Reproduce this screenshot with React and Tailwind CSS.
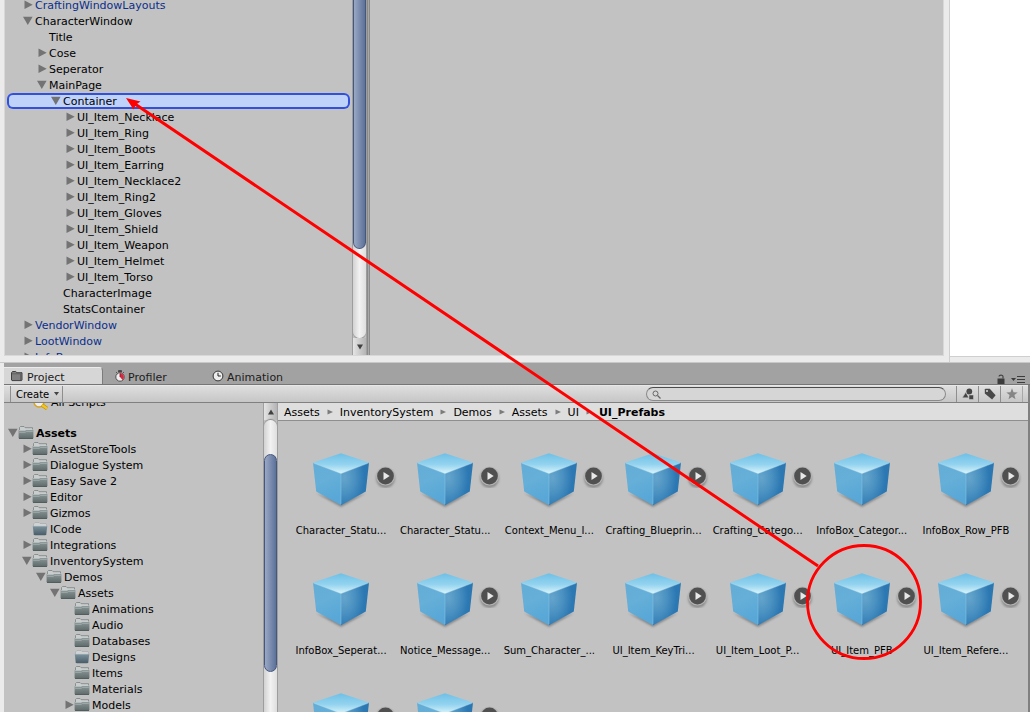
import React from "react";

const HIERARCHY = [
  { name: "CraftingWindowLayouts", depth: 0, arrow: "closed", prefab: true },
  { name: "CharacterWindow", depth: 0, arrow: "open" },
  { name: "Title", depth: 1 },
  { name: "Cose", depth: 1, arrow: "closed" },
  { name: "Seperator", depth: 1, arrow: "closed" },
  { name: "MainPage", depth: 1, arrow: "open" },
  { name: "Container", depth: 2, arrow: "open", selected: true },
  { name: "UI_Item_Necklace", depth: 3, arrow: "closed" },
  { name: "UI_Item_Ring", depth: 3, arrow: "closed" },
  { name: "UI_Item_Boots", depth: 3, arrow: "closed" },
  { name: "UI_Item_Earring", depth: 3, arrow: "closed" },
  { name: "UI_Item_Necklace2", depth: 3, arrow: "closed" },
  { name: "UI_Item_Ring2", depth: 3, arrow: "closed" },
  { name: "UI_Item_Gloves", depth: 3, arrow: "closed" },
  { name: "UI_Item_Shield", depth: 3, arrow: "closed" },
  { name: "UI_Item_Weapon", depth: 3, arrow: "closed" },
  { name: "UI_Item_Helmet", depth: 3, arrow: "closed" },
  { name: "UI_Item_Torso", depth: 3, arrow: "closed" },
  { name: "CharacterImage", depth: 2 },
  { name: "StatsContainer", depth: 2 },
  { name: "VendorWindow", depth: 0, arrow: "closed", prefab: true },
  { name: "LootWindow", depth: 0, arrow: "closed", prefab: true },
  { name: "InfoBox", depth: 0, arrow: "closed", prefab: true },
];

const FOLDERS = [
  { name: "Assets", depth: 0, arrow: "open", bold: true },
  { name: "AssetStoreTools", depth: 1, arrow: "closed" },
  { name: "Dialogue System", depth: 1, arrow: "closed" },
  { name: "Easy Save 2", depth: 1, arrow: "closed" },
  { name: "Editor", depth: 1, arrow: "closed" },
  { name: "Gizmos", depth: 1, arrow: "closed" },
  { name: "ICode", depth: 1, empty: true },
  { name: "Integrations", depth: 1, arrow: "closed" },
  { name: "InventorySystem", depth: 1, arrow: "open" },
  { name: "Demos", depth: 2, arrow: "open" },
  { name: "Assets", depth: 3, arrow: "open" },
  { name: "Animations", depth: 4 },
  { name: "Audio", depth: 4 },
  { name: "Databases", depth: 4 },
  { name: "Designs", depth: 4, empty: true },
  { name: "Items", depth: 4 },
  { name: "Materials", depth: 4 },
  { name: "Models", depth: 4, arrow: "closed" },
];

const ASSETS = [
  { name: "Character_Statu...", play: true },
  { name: "Character_Statu...", play: true },
  { name: "Context_Menu_I...", play: true },
  { name: "Crafting_Blueprin...", play: true },
  { name: "Crafting_Catego...", play: true },
  { name: "InfoBox_Categor..." },
  { name: "InfoBox_Row_PFB", play: true },
  { name: "InfoBox_Seperat..." },
  { name: "Notice_Message...", play: true },
  { name: "Sum_Character_..." },
  { name: "UI_Item_KeyTri...", play: true },
  { name: "UI_Item_Loot_P...", play: true },
  { name: "UI_Item_PFB", play: true },
  { name: "UI_Item_Refere...", play: true },
  { name: "", play: true },
  { name: "", play: true },
];

const HIERARCHY_INDENT = ["pl-4", "pl-[30px]", "pl-11", "pl-[58px]"];
const FOLDER_INDENT = ["pl-1", "pl-[18px]", "pl-8", "pl-[46px]", "pl-[60px]"];

function Foldout({ state }) {
  return (
    <svg className="h-3 w-3 shrink-0" viewBox="0 0 12 12" fill="#737373" aria-hidden="true">
      {state === "closed" && <path d="M1.5 1.5 9.7 5.8 1.5 10z" />}
      {state === "open" && <path d="M0 1.8h9.6L4.8 10z" />}
    </svg>
  );
}

function FolderIcon({ empty }) {
  return (
    <svg className="h-4 w-4 shrink-0" viewBox="0 0 16 16" aria-hidden="true">
      {empty ? (
        <>
          <path d="M1.500 7V3L3 1.500h4l1 1h6L14.700 4v3z" fill="#d0d3d4" stroke="#a0a5a7" strokeWidth=".6" />
          <path d="M.8 5h14.400l-.9 8.300-1 .9H2.700l-1-.9z" fill="url(#folderEmpty)" />
          <path d="M1.200 5.400h13.600" stroke="#9fb0b8" strokeWidth=".7" />
        </>
      ) : (
        <>
          <path d="M1.500 6V2.500l1-1h3.500l1.200 1.200h7.300V6z" fill="#c9cdcd" stroke="#7a8181" strokeWidth=".8" />
          <path d="M.6 5h14.800v8l-.8.900H1.400l-.8-.9z" fill="url(#folderFull)" />
          <path d="M1.200 5.600h6L8.200 4.600h6.600" fill="none" stroke="#c5cccc" strokeWidth=".8" />
          <path d="M1.200 7.400h6l1-.9h6.600" fill="none" stroke="#a9b4b4" strokeWidth=".7" />
          <path d="M1 13.500h14" stroke="#4e5a5a" strokeWidth=".8" />
        </>
      )}
    </svg>
  );
}

function SharedGradients() {
  return (
    <svg className="absolute h-0 w-0" aria-hidden="true">
      <defs>
        <linearGradient id="folderFull" x1="0" y1="0" x2="0" y2="1">
          <stop offset="0" stopColor="#8b9797" />
          <stop offset="1" stopColor="#5d6969" />
        </linearGradient>
        <linearGradient id="folderEmpty" x1="0" y1="0" x2="0" y2="1">
          <stop offset="0" stopColor="#7d939e" />
          <stop offset="1" stopColor="#475c67" />
        </linearGradient>
        <linearGradient id="cubeTop" x1="0" y1="0" x2="0" y2="1">
          <stop offset="0" stopColor="#6fbfe6" />
          <stop offset=".55" stopColor="#93d3ef" />
          <stop offset="1" stopColor="#d9f4fb" />
        </linearGradient>
        <linearGradient id="cubeLeft" x1="0" y1="0" x2=".3" y2="1">
          <stop offset="0" stopColor="#63acd6" />
          <stop offset=".5" stopColor="#65afd8" />
          <stop offset="1" stopColor="#58a7d7" />
        </linearGradient>
        <radialGradient id="cubeRight" cx=".12" cy=".35" r=".95">
          <stop offset="0" stopColor="#65a5cc" />
          <stop offset=".4" stopColor="#4a91c1" />
          <stop offset=".75" stopColor="#2c78b3" />
          <stop offset="1" stopColor="#2c76b0" />
        </radialGradient>
      </defs>
    </svg>
  );
}

function Cube() {
  return (
    <svg className="h-14 w-[60px]" viewBox="0 0 60 56" aria-hidden="true">
      <path d="M5 40 30 54 55 40 30 48z" fill="#555" opacity=".55" style={{ filter: "blur(1px)" }} />
      <path d="M2 9.500 30 20v32.300L5.200 38.500z" fill="url(#cubeLeft)" />
      <path d="M58 9.500 30 20v32.300l24.800-13.800z" fill="url(#cubeRight)" />
      <path d="M30 .2 58 9.500 30 20.500 2 9.500z" fill="url(#cubeTop)" />
      <path d="M2.400 10 30 20.600 57.600 10" fill="none" stroke="#c5eaf6" strokeWidth=".6" opacity=".7" />
      <path d="M30 20.600V51" stroke="#8cc9e8" strokeWidth=".7" opacity=".7" />
    </svg>
  );
}

function PlayBadge() {
  return (
    <svg className="absolute top-[11px] left-1/2 ml-8 h-6 w-6" viewBox="0 0 24 24" aria-hidden="true">
      <circle cx="12.500" cy="14.500" r="9.500" fill="#555" opacity=".5" style={{ filter: "blur(1.2px)" }} />
      <circle cx="12.500" cy="12" r="9.600" fill="#b4b4b4" />
      <circle cx="12.500" cy="12" r="8.400" fill="#505050" />
      <path d="M10.500 8v8l6.200-4z" fill="#e8e8e8" />
    </svg>
  );
}

function ScrollArrow({ up }) {
  return (
    <button
      type="button"
      aria-label={up ? "Scroll up" : "Scroll down"}
      className="flex h-[17px] w-full shrink-0 items-center justify-center bg-linear-to-r from-[#e4e4e4] to-[#b4b4b4]"
    >
      <svg className="h-[6px] w-2" viewBox="0 0 8 6" fill="#404040">
        <path d={up ? "M1 5.5h6L4 .5z" : "M1 .5h6L4 5.5z"} />
      </svg>
    </button>
  );
}

function HierarchyPane() {
  return (
    <section aria-label="Hierarchy" className="flex w-[362px] shrink-0 overflow-hidden bg-[#c2c2c2]">
      <ul className="-mt-1 min-w-0 flex-1 pt-px">
        {HIERARCHY.map((row, i) => (
          <li
            key={i}
            className={
              row.selected
                ? "mr-[2px] ml-[2px] rounded-md bg-[#bfd3fa] ring-2 ring-[#3250dc] ring-inset"
                : "mr-[2px] ml-[2px]"
            }
          >
            <div
              className={`flex h-4 items-center ${HIERARCHY_INDENT[row.depth]} ${row.prefab ? "text-[#0a2e8c]" : "text-black"}`}
            >
              <Foldout state={row.arrow} />
              <span className="pt-[2px]">{row.name}</span>
            </div>
          </li>
        ))}
      </ul>
      <div className="flex w-[15px] shrink-0 flex-col border-x border-[#a0a0a0] bg-[#c2c2c2]">
        <div className="flex-1 rounded-b-lg bg-linear-to-r from-[#d2d2d2] via-[#f2f2f2] to-[#dedede] shadow-[0_1px_1px_#888]">
          <div className="h-[249px] rounded-b-lg border-x border-b border-[#46567c] bg-linear-to-r from-[#9aa8c4] to-[#5d7199]" />
        </div>
        <ScrollArrow />
      </div>
    </section>
  );
}

function Tab({ active, icon, children }) {
  return (
    <button
      type="button"
      role="tab"
      aria-selected={Boolean(active)}
      className={
        active
          ? "flex h-[17px] w-[99px] items-center gap-1 rounded-tr border-t border-r border-[#7c7c7c] border-t-[#ececec] bg-[#d6d6d6] pl-[7px]"
          : "flex h-[17px] w-[97px] items-center gap-[3px] border-t border-transparent pl-3"
      }
    >
      {icon}
      <span className="pt-[4px]">{children}</span>
    </button>
  );
}

function TabBar() {
  return (
    <div className="flex h-[22px] items-end border-b border-[#767676] bg-[#a2a2a2] pr-1 text-[#1c1c1c]">
      <div role="tablist" className="flex">
        <Tab
          active
          icon={
            <svg className="h-3 w-3" viewBox="0 0 12 12">
              <path d="M.5 10V2.800L1.500 1.500h3.200l1.200 1.200H11v7.500l-.6.400H1z" fill="#808080" stroke="#333" strokeWidth=".9" />
              <path d="M1 3.800h8.500v6.500" fill="none" stroke="#555" strokeWidth=".7" />
            </svg>
          }
        >
          Project
        </Tab>
        <Tab
          icon={
            <svg className="h-3 w-[10px]" viewBox="0 0 10 12">
              <path d="M3.500.5h3V2h-3zM1 2l1 1M9 2 8 3" fill="#444" stroke="#444" strokeWidth=".8" />
              <circle cx="5" cy="7" r="4.200" fill="#eee" stroke="#444" strokeWidth=".9" />
              <path d="M5 7V3a4 4 0 0 1 2.600 7z" fill="#d7263d" />
              <path d="M5 7V3.500" stroke="#812" strokeWidth=".8" />
            </svg>
          }
        >
          Profiler
        </Tab>
        <Tab
          icon={
            <svg className="h-3 w-3" viewBox="0 0 12 12">
              <circle cx="6" cy="6" r="4.900" fill="#eee" stroke="#333" strokeWidth="1" />
              <path d="M6 2.800V6h2.800" fill="none" stroke="#222" strokeWidth="1" />
            </svg>
          }
        >
          Animation
        </Tab>
      </div>
      <div className="ml-auto flex items-center gap-1">
        <button type="button" aria-label="Lock">
          <svg className="h-[10px] w-[10px]" viewBox="0 0 10 10">
            <path d="M1.500 4.500h7V10h-7z" fill="#3c3c3c" />
            <path d="M3 2.500C3 .7 7 .5 7 2.500v2" fill="none" stroke="#444" strokeWidth="1.200" />
          </svg>
        </button>
        <button type="button" aria-label="Panel menu">
          <svg className="h-2 w-4" viewBox="0 0 16 8">
            <path d="M1 3h5L3.500 6z" fill="#3c3c3c" />
            <path d="M7 1.500h8M7 4.500h8M7 7.500h8" stroke="#3c3c3c" strokeWidth="1" />
          </svg>
        </button>
      </div>
    </div>
  );
}

function ToolButton({ label, children }) {
  return (
    <button type="button" aria-label={label} className="flex w-[22px] items-center justify-center border-l border-[#8e8e8e]">
      <svg className="h-3 w-3" viewBox="0 0 12 12">
        {children}
      </svg>
    </button>
  );
}

function Toolbar() {
  return (
    <div className="flex h-[18px] border-y border-t-[#e8e8e8] border-b-[#808080] bg-linear-to-b from-[#dedede] to-[#c6c6c6] pl-[6px]">
      <button
        type="button"
        className="flex w-[53px] items-center justify-between border-x border-[#8e8e8e] pr-[3px] pl-[5px] text-[10px]"
      >
        <span className="pt-px">Create</span>
        <svg className="h-1 w-[5px]" viewBox="0 0 5 4" fill="#444">
          <path d="M0 0h5L2.500 3.500z" />
        </svg>
      </button>
      <label className="ml-auto flex h-[14px] w-[300px] items-center self-center rounded-full border border-[#8a8a8a] border-t-[#4c4c4c] bg-[#d6d6d6] pl-[5px]">
        <svg className="h-[9px] w-[9px]" viewBox="0 0 9 9" fill="none" stroke="#666">
          <circle cx="3.500" cy="3.500" r="2.500" strokeWidth="1" />
          <path d="m5.500 5.500 3 3" strokeWidth="1.300" />
        </svg>
        <input type="text" aria-label="Search assets" className="h-3 min-w-0 flex-1 bg-transparent px-1 text-[10px] outline-none" />
      </label>
      <div className="ml-[10px] flex w-[72px]">
        <ToolButton label="Search by type">
          <circle cx="7.300" cy="3.500" r="2.900" fill="#444" />
          <path d="M.3 9.800 3.800 4.300l3 5.500z" fill="#444" stroke="#cfcfcf" strokeWidth=".5" />
          <path d="M7 7h4.500v4.500H7z" fill="#444" stroke="#cfcfcf" strokeWidth=".5" />
        </ToolButton>
        <ToolButton label="Search by label">
          <path d="M.8 1.500 1.500.8h4.300l5.800 6.500-3.500 4.200L.8 5.500z" fill="#484848" />
          <circle cx="3" cy="3" r="1" fill="#d8d8d8" />
        </ToolButton>
        <ToolButton label="Save search">
          <path d="m6 .3 1.500 3.900 4.200.2-3.300 2.700 1.100 4.200L6 9l-3.500 2.300 1.100-4.200L.3 4.400l4.200-.2z" fill="#858585" />
        </ToolButton>
        <div className="border-l border-[#a8a8a8]" />
      </div>
    </div>
  );
}

function FolderTree() {
  return (
    <div className="flex w-[274px] shrink-0 overflow-hidden">
      <div className="min-w-0 flex-1">
        <div className="-mt-[9px] mb-[15px] flex h-4 items-center gap-[3px] pl-7">
          <svg className="h-4 w-4" viewBox="0 0 16 16">
            <circle cx="7" cy="8" r="5" fill="#eee" stroke="#d5a51e" strokeWidth="1.500" />
            <path d="m10 11 5 3.500" stroke="#c08c00" strokeWidth="3.500" />
            <path d="m10 11 5 3.500" stroke="#f4c61c" strokeWidth="2.400" />
          </svg>
          <span className="pt-[2px]">All Scripts</span>
        </div>
        <ul>
          {FOLDERS.map((row, i) => (
            <li key={i} className={`flex h-4 items-center ${FOLDER_INDENT[row.depth]}`}>
              <Foldout state={row.arrow} />
              <div className="-ml-[2px] flex items-center gap-[2px]">
                <FolderIcon empty={row.empty} />
                <span className={row.bold ? "pt-[2px] font-bold" : "pt-[2px]"}>{row.name}</span>
              </div>
            </li>
          ))}
        </ul>
      </div>
      <div className="flex w-[15px] shrink-0 flex-col border-x border-[#a0a0a0]">
        <ScrollArrow up />
        <div className="flex-1 rounded-t-lg bg-linear-to-r from-[#d2d2d2] via-[#f2f2f2] to-[#dedede] pt-[34px] shadow-[0_-1px_1px_#888]">
          <div className="h-[218px] rounded-lg border border-[#46567c] bg-linear-to-r from-[#9aa8c4] to-[#5d7199]" />
        </div>
      </div>
    </div>
  );
}

function Crumb({ children }) {
  return (
    <li className="flex items-center">
      <a href="#" className="pt-[2px] whitespace-nowrap">
        {children}
      </a>
      <svg className="mx-[7px] h-[6px] w-[6px]" viewBox="0 0 6 6" fill="#7c7c7c">
        <path d="M.5.500 6 3 .5 5.500z" />
      </svg>
    </li>
  );
}

function AssetBrowser() {
  return (
    <div className="min-w-0 flex-1 overflow-hidden">
      <nav aria-label="Folder path" className="h-[18px] border-b border-[#8e8e8e] bg-[#dedede] pl-[6px]">
        <ol className="flex h-full items-center">
          <Crumb>Assets</Crumb>
          <Crumb>InventorySystem</Crumb>
          <Crumb>Demos</Crumb>
          <Crumb>Assets</Crumb>
          <Crumb>UI</Crumb>
          <li className="pt-[2px] font-bold">UI_Prefabs</li>
        </ol>
      </nav>
      <ul className="grid grid-cols-7 pt-8 pr-[10px] pl-[11px]">
        {ASSETS.map((asset, i) => (
          <li key={i} className="relative flex h-[120px] flex-col items-center">
            <Cube />
            {asset.play && <PlayBadge />}
            <span className="mt-4 text-[10px] leading-3 whitespace-nowrap">{asset.name}</span>
          </li>
        ))}
      </ul>
    </div>
  );
}

function Annotation() {
  return (
    <svg className="pointer-events-none absolute top-0 left-0" width="1030" height="712" viewBox="0 0 1030 712" aria-hidden="true">
      <path d="M135 104 818 566" stroke="#f00" strokeWidth="3" />
      <path d="m126 98 14.500 3.500-4.500 3-2.500 5z" fill="#f00" />
      <circle cx="864" cy="602" r="56.500" fill="none" stroke="#f00" strokeWidth="2.800" />
    </svg>
  );
}

export default function App() {
  return (
    <div className="relative flex h-screen flex-col overflow-hidden bg-[#ebebeb] font-['Verdana','DejaVu_Sans',sans-serif] text-[11px] leading-4 text-black">
      <SharedGradients />
      <div className="flex h-[362px] shrink-0">
        <div className="flex min-w-0 flex-1 border-r border-[#cfcfcf] pr-[5px] pb-[6px] pl-1">
          <div className="flex min-w-0 flex-1 border-x border-b border-[#d8d8d8]">
            <HierarchyPane />
            <div className="w-px bg-[#8a8a8a]" />
            <div className="w-px bg-[#a8a8a8]" />
            <main className="min-w-0 flex-1 border-l border-[#8a8a8a] bg-[#c2c2c2]" />
          </div>
        </div>
        <div className="w-20 pb-[5px]">
          <div className="h-full border-b border-[#cfcfcf] bg-white" />
        </div>
      </div>
      <div className="flex min-h-0 flex-1 flex-col border-t border-[#c8c8c8] pl-1">
        <TabBar />
        <div className="flex min-h-0 flex-1 flex-col border-r-2 border-[#808080] bg-[#c2c2c2]">
          <Toolbar />
          <div className="flex min-h-0 flex-1">
            <FolderTree />
            <AssetBrowser />
          </div>
        </div>
      </div>
      <Annotation />
    </div>
  );
}
